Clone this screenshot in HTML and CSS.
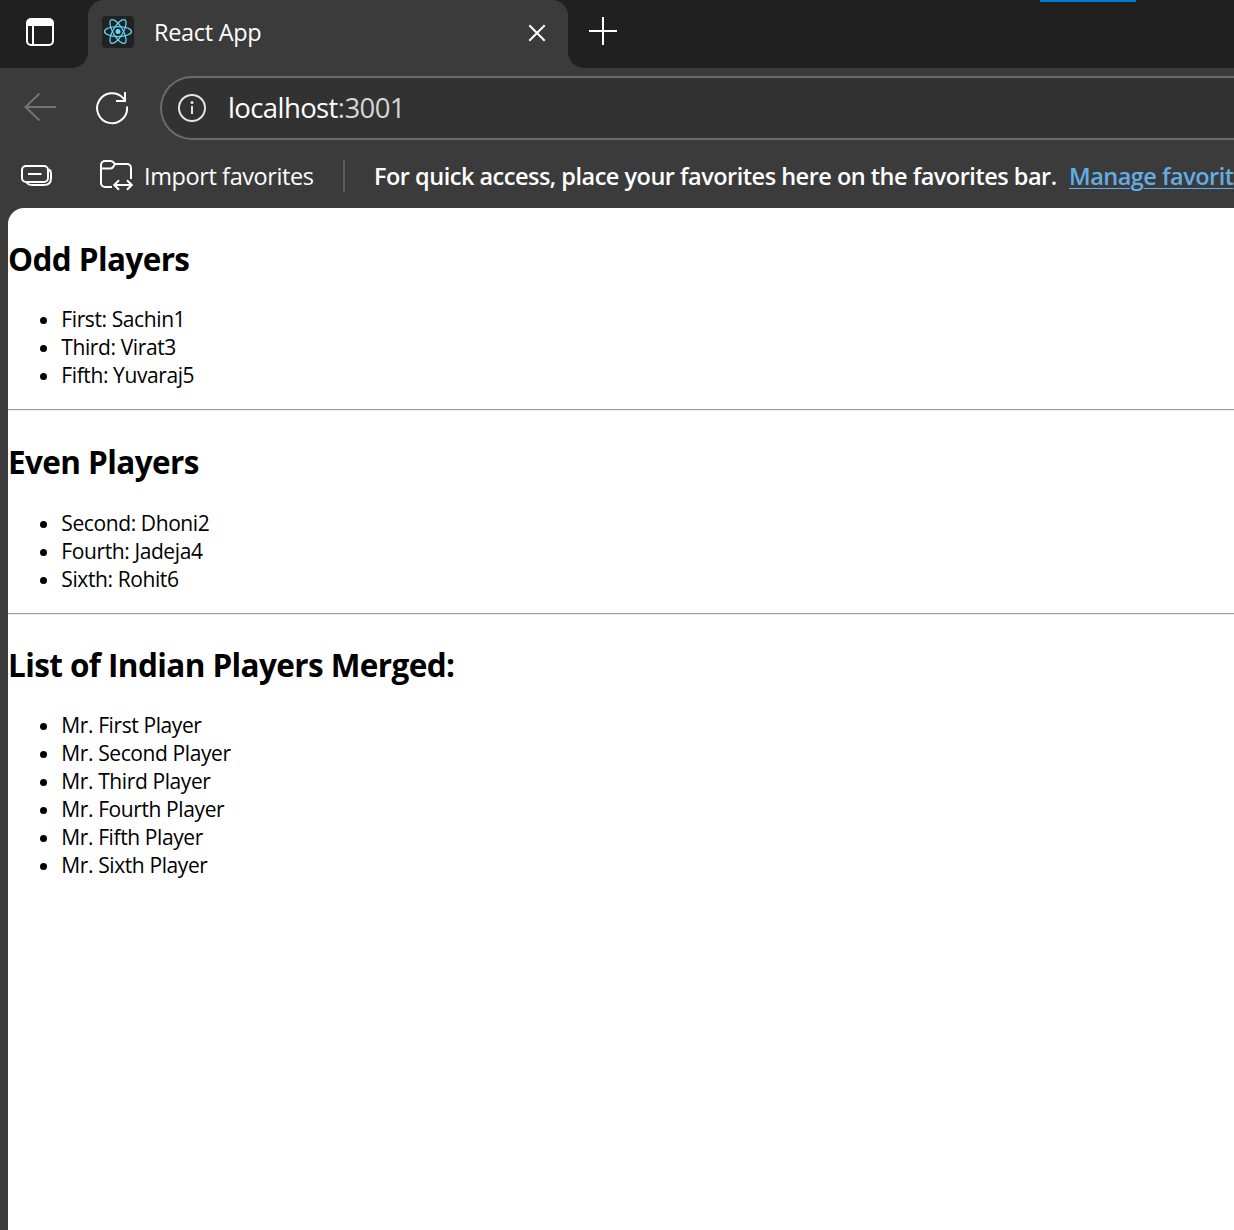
FILE: index.html
```html
<!DOCTYPE html>
<html lang="en">
<head>
<meta charset="utf-8">
<title>React App</title>
<link rel="stylesheet" href="styles.css">
</head>
<body>
<div class="browser">
  <header class="tabstrip">
    <div class="tab-actions">
      <svg width="28" height="28" viewBox="0 0 28 28" fill="none" stroke="#fff" stroke-width="2"><rect x="1" y="1" width="26" height="26" rx="4"/><path d="M1 8V4.500a3.500 3.500 0 0 1 3.500-3.500h19a3.500 3.500 0 0 1 3.500 3.500V8z" fill="#fff" stroke="none"/><path d="M7 8v19"/></svg>
    </div>
    <div class="tab">
      <svg class="favicon" width="32" height="32" viewBox="0 0 32 32"><rect width="32" height="32" rx="4" fill="#222"/><g transform="translate(16 15.500)" fill="none" stroke="#61dafb" stroke-width="1.250"><circle r="2.500" fill="#61dafb" stroke="none"/><ellipse rx="13.500" ry="5"/><ellipse rx="13.500" ry="5" transform="rotate(60)"/><ellipse rx="13.500" ry="5" transform="rotate(120)"/></g></svg>
      <span class="tab-title">React App</span>
      <svg class="close" width="18" height="18" viewBox="0 0 18 18" stroke="#fff" stroke-width="2"><path d="M1.300 1.300l15.400 15.400M16.700 1.300L1.300 16.700"/></svg>
    </div>
    <div class="new-tab">
      <svg width="28" height="28" viewBox="0 0 28 28" stroke="#fff" stroke-width="2"><path d="M14 0v28M0 14h28"/></svg>
    </div>
    <div class="progress"></div>
  </header>
  <div class="toolbar">
    <svg class="back" width="32" height="28" viewBox="0 0 32 28" fill="none" stroke="#757575" stroke-width="2"><path d="M15.500.500L1.500 14l14 13.500M1.500 14H32"/></svg>
    <svg class="reload" width="34" height="34" viewBox="0 0 34 34" fill="none" stroke="#fff" stroke-width="2"><path d="M32 15.500A15 15 0 1 1 28.200 7.100L30 9.500M30 1v9h-9"/></svg>
    <div class="address">
      <svg width="28" height="28" viewBox="0 0 28 28" fill="none" stroke="#e4e4e4" stroke-width="2"><circle cx="14" cy="14" r="13"/><path d="M14 12v8"/><circle cx="14" cy="8.500" r="1.500" fill="#e4e4e4" stroke="none"/></svg>
      <span class="url">localhost<span class="port">:3001</span></span>
    </div>
  </div>
  <div class="favorites">
    <svg class="stack" width="32" height="22" viewBox="0 0 32 22" fill="none" stroke="#fff" stroke-width="2"><rect x="1" y="1" width="26" height="16" rx="4"/><path d="M7 9h13.500M28 4.500c1.400.700 2 2 2 4V13c0 4.500-2.500 7-7 7H11c-2.500 0-4-.500-5.200-2"/></svg>
    <svg class="folder" width="34" height="32" viewBox="0 0 34 32" fill="none" stroke="#fff" stroke-width="2"><path d="M13 27H6a4 4 0 0 1-4-4V5a4 4 0 0 1 4-4h5.500c1.500 0 2.300.500 3 1.500L16 4h12a4 4 0 0 1 4 4v11M2 8.500h9.500c1.800 0 2.300-.700 3-2L16 4M15.500 25h17M20 20.200l-4.800 4.800 4.800 4.800M28 20.200l4.800 4.800-4.800 4.800"/></svg>
    <span class="import">Import favorites</span>
    <span class="divider"></span>
    <span class="hint">For quick access, place your favorites here on the favorites bar.</span>
    <a class="manage">Manage favorit</a>
  </div>
  <main class="page">
    <h2>Odd Players</h2>
    <ul>
      <li>First: Sachin1</li>
      <li>Third: Virat3</li>
      <li>Fifth: Yuvaraj5</li>
    </ul>
    <hr>
    <h2 class="even">Even Players</h2>
    <ul>
      <li>Second: Dhoni2</li>
      <li>Fourth: Jadeja4</li>
      <li>Sixth: Rohit6</li>
    </ul>
    <hr>
    <h2>List of Indian Players Merged:</h2>
    <ul>
      <li>Mr. First Player</li>
      <li>Mr. Second Player</li>
      <li>Mr. Third Player</li>
      <li>Mr. Fourth Player</li>
      <li>Mr. Fifth Player</li>
      <li>Mr. Sixth Player</li>
    </ul>
  </main>
</div>
</body>
</html>
```
FILE: styles.css
```css
* { box-sizing: border-box; }
body { margin: 0; font-family: "Open Sans", "Noto Sans", sans-serif; background: #3b3b3b; overflow: hidden; }
svg { display: block; flex: none; }

.browser { display: flex; flex-direction: column; height: 1230px; width: 1234px; overflow: hidden; white-space: nowrap; }

.tabstrip { display: flex; height: 68px; flex: none; background: #3b3b3b; color: #fff; }
.tab-actions { width: 88px; padding: 18px 0 0 26px; background: #202020; border-bottom-right-radius: 16px; }
.tab { position: relative; display: flex; width: 480px; height: 68px; padding: 16px 22px 0 14px; background: #3b3b3b; }
.tab::before, .tab::after { content: ""; position: absolute; top: 0; width: 16px; height: 16px; }
.tab::before { left: 0; background: radial-gradient(circle at 100% 100%, #3b3b3b 15.500px, #202020 16.500px); }
.tab::after { right: 0; background: radial-gradient(circle at 0 100%, #3b3b3b 15.500px, #202020 16.500px); }
.tab-title { flex: 1; margin-left: 20px; font-size: 23.500px; line-height: 32px; letter-spacing: -0.3px; }
.close { margin-top: 8px; }
.new-tab { flex: 1; padding: 17px 0 0 21px; background: #202020; border-bottom-left-radius: 16px; }
.progress { width: 194px; background: linear-gradient(#0078d4, #0078d4) 0 0 / 96px 2px no-repeat #202020; }

.toolbar { display: flex; height: 72px; flex: none; padding: 8px 0 0 24px; }
.back { margin-top: 17px; }
.reload { margin: 15px 31px 0 39px; }
.address { display: flex; align-items: center; flex: 1; height: 64px; padding-left: 16px; margin-right: -4px; border: 2px solid #6b6b6b; border-right: 0; border-radius: 32px 0 0 32px; background: #323232; }
.url { margin-left: 22px; font-size: 27.500px; line-height: 38px; padding-bottom: 1px; color: #fff; letter-spacing: -0.6px; }
.port { color: #d6d6d6; }

.favorites { display: flex; align-items: center; height: 68px; flex: none; padding: 4px 0 0 21px; color: #fff; font-size: 23.500px; line-height: 32px; }
.import, .hint, .manage { padding-bottom: 1px; flex: none; }
.folder { margin-left: 46px; }
.import { width: 200px; margin-left: 11px; letter-spacing: -0.4px; }
.divider { width: 2px; height: 32px; margin-left: -1px; background: #5c5c5c; flex: none; }
.hint { width: 695px; margin-left: 29px; font-weight: 600; letter-spacing: -0.5px; }
.manage { font-weight: 600; letter-spacing: -0.5px; color: #63ade5; text-decoration: underline; text-decoration-thickness: 1px; text-underline-offset: 3px; }

.page { flex: 1; margin-left: 8px; padding-top: 29px; background: #fff; border-top-left-radius: 16px; color: #000; }
h2 { margin: 0 0 25px; font-size: 31.500px; line-height: 43px; font-weight: 700; letter-spacing: -0.6px; }
.even { padding-top: 1px; margin-bottom: 26px; }
ul { margin: 0; padding-left: 53.330px; font-size: 21px; line-height: 28px; letter-spacing: -0.4px; }
hr { height: 2px; margin: 20px 0 28px; border: 0; border-top: 1px solid #9a9a9a; border-bottom: 1px solid #eee; }
```
